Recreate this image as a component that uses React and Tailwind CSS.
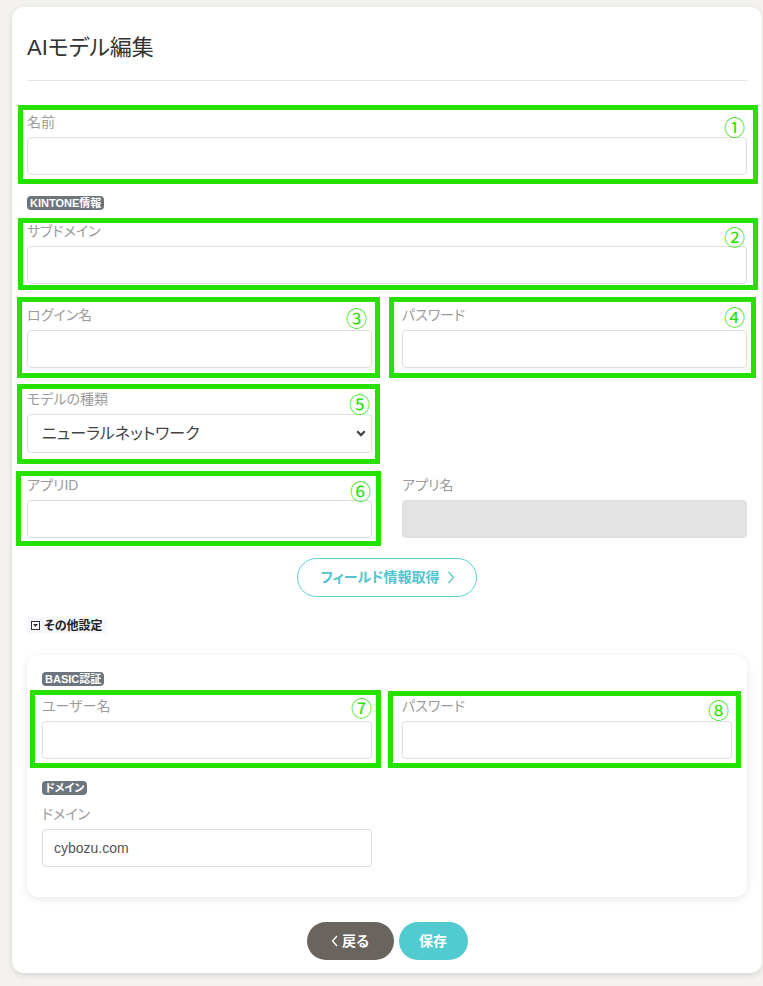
import React from 'react';

const FONT = "font-['Liberation_Sans','Noto_Sans_CJK_JP',sans-serif] [font-feature-settings:'palt']";

const Mark = ({ n, box, num }) => (
  <div className={`pointer-events-none absolute border-[5px] border-[#27e000] ${box}`}>
    <span className={`absolute font-['Noto_Sans_CJK_JP',sans-serif] text-[21px] leading-[21px] text-[#27e000] ${num}`}>
      {n}
    </span>
  </div>
);

const Field = ({ label, children, mark }) => (
  <div className="relative">
    <label className="mb-[5px] block h-[20px] text-[14px] leading-[20px] text-[#9b9b9b]">{label}</label>
    {children}
    {mark}
  </div>
);

const TextInput = ({ value, disabled }) => (
  <input
    type="text"
    defaultValue={value}
    disabled={disabled}
    className={`block h-[38px] w-full rounded-[4px] border border-[#dedede] px-[11px] text-[14px] text-[#555] outline-none ${
      disabled ? 'bg-[#e3e3e3]' : 'bg-white'
    }`}
  />
);

const Badge = ({ children }) => (
  <span className="inline-block h-[14px] rounded-[4px] bg-[#6c757d] px-[3px] text-[11px] font-bold leading-[14px] text-white">
    {children}
  </span>
);

const App = () => {
  return (
    <div className={`min-h-[986px] bg-[#f3f2ee] pt-[7px] pl-[12px] pr-[1px] pb-[13px] ${FONT}`}>
      <div className="rounded-[12px] bg-white px-[15px] pt-[26px] pb-[13px] shadow-[0_2px_6px_rgba(0,0,0,0.12)]">
        <h1 className="h-[30px] text-[22px] font-normal leading-[30px] text-[#333]">AIモデル編集</h1>
        <div className="mt-[17px] h-px bg-[#e5e5e5]" />

        <div className="mt-[31px]">
          <Field
            label="名前"
            mark={<Mark n="①" box="-top-[7px] -bottom-[9px] -left-[9px] -right-[11px]" num="top-[6px] right-[8px]" />}
          >
            <TextInput />
          </Field>
        </div>

        <div className="mt-[21px] flex">
          <Badge>KINTONE情報</Badge>
        </div>

        <div className="mt-[11px]">
          <Field
            label="サブドメイン"
            mark={<Mark n="②" box="-top-[3px] -bottom-[6px] -left-[9px] -right-[11px]" num="top-[3px] right-[8px]" />}
          >
            <TextInput />
          </Field>
        </div>

        <div className="mt-[21px] grid grid-cols-2 gap-x-[30px]">
          <Field
            label="ログイン名"
            mark={<Mark n="③" box="-top-[8px] -bottom-[10px] -left-[10px] -right-[8px]" num="top-[5px] right-[8px]" />}
          >
            <TextInput />
          </Field>
          <Field
            label="パスワード"
            mark={<Mark n="④" box="-top-[8px] -bottom-[10px] -left-[13px] -right-[9px]" num="top-[4px] right-[6px]" />}
          >
            <TextInput />
          </Field>
        </div>

        <div className="mt-[21px] grid grid-cols-2 gap-x-[30px]">
          <Field
            label="モデルの種類"
            mark={<Mark n="⑤" box="-top-[5px] -bottom-[11px] -left-[10px] -right-[8px]" num="top-[4px] right-[5px]" />}
          >
            <div className="relative">
              <select
                defaultValue="nn"
                className="block h-[39px] w-full appearance-none rounded-[4px] border border-[#dedede] bg-white pl-[14px] text-[16px] text-[#444] outline-none"
              >
                <option value="nn">ニューラルネットワーク</option>
              </select>
              <svg
                className="pointer-events-none absolute right-[6px] top-[16px]"
                width="10"
                height="7"
                viewBox="0 0 10 7"
              >
                <path d="M1.2 1.3 5 5.1 8.8 1.3" fill="none" stroke="#444" strokeWidth="2.2" />
              </svg>
            </div>
          </Field>
        </div>

        <div className="mt-[22px] grid grid-cols-2 gap-x-[30px]">
          <Field
            label="アプリID"
            mark={<Mark n="⑥" box="-top-[4px] -bottom-[8px] -left-[11px] -right-[9px]" num="top-[4px] right-[5px]" />}
          >
            <TextInput />
          </Field>
          <Field label="アプリ名">
            <TextInput disabled />
          </Field>
        </div>

        <div className="mt-[20px] flex justify-center">
          <button className="flex h-[39px] items-center gap-[8px] rounded-full border border-[#5ccfd4] bg-white pl-[23px] pr-[21px] text-[14px] font-bold text-[#4fc6cd]">
            フィールド情報取得
            <svg width="8" height="13" viewBox="0 0 8 13">
              <path d="M1.5 1 6.5 6.5 1.5 12" fill="none" stroke="#4fc6cd" strokeWidth="1.2" />
            </svg>
          </button>
        </div>

        <div className="mt-[20px] flex">
          <div className="flex h-[17px] items-center gap-[4px] rounded-[3px] bg-[#f5f7fa] pl-[4px] pr-[4px] text-[12px] font-bold text-[#222]">
            <span className="flex h-[9px] w-[9px] items-center justify-center border border-[#333] bg-white">
              <svg width="5" height="3" viewBox="0 0 5 3">
                <path d="M0 0h5L2.5 3z" fill="#333" />
              </svg>
            </span>
            その他設定
          </div>
        </div>

        <div className="mt-[21px] rounded-[12px] bg-white px-[15px] pt-[17px] pb-[30px] shadow-[0_2px_8px_rgba(0,0,0,0.1)]">
          <div className="flex">
            <Badge>BASIC認証</Badge>
          </div>
          <div className="mt-[10px] grid grid-cols-2 gap-x-[30px]">
            <Field
              label="ユーザー名"
              mark={<Mark n="⑦" box="-top-[6px] -bottom-[9px] -left-[12px] -right-[9px]" num="top-[2px] right-[4px]" />}
            >
              <TextInput />
            </Field>
            <Field
              label="パスワード"
              mark={<Mark n="⑧" box="-top-[5px] -bottom-[9px] -left-[14px] -right-[9px]" num="top-[3px] right-[7px]" />}
            >
              <TextInput />
            </Field>
          </div>

          <div className="mt-[22px] flex">
            <Badge>ドメイン</Badge>
          </div>
          <div className="mt-[9px] grid grid-cols-2 gap-x-[30px]">
            <Field label="ドメイン">
              <TextInput value="cybozu.com" />
            </Field>
          </div>
        </div>

        <div className="mt-[25px] flex justify-center gap-[5px]">
          <button className="flex h-[38px] w-[87px] items-center justify-center gap-[4px] rounded-full bg-[#6a645e] text-[14px] font-bold text-white">
            <svg width="7" height="12" viewBox="0 0 7 12">
              <path d="M6 1 1.5 6 6 11" fill="none" stroke="#fff" strokeWidth="1.3" />
            </svg>
            戻る
          </button>
          <button className="flex h-[38px] w-[69px] items-center justify-center rounded-full bg-[#52cbd0] text-[14px] font-bold text-white">
            保存
          </button>
        </div>
      </div>
    </div>
  );
};

export default App;
